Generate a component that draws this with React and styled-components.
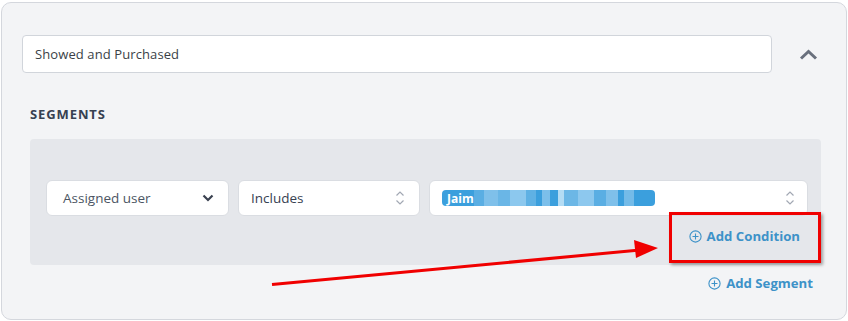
import React from 'react';
import styled, { createGlobalStyle } from 'styled-components';

const GlobalStyle = createGlobalStyle`
  body {
    margin: 0;
    background: #ffffff;
    font-family: "Open Sans", "Noto Sans", sans-serif;
  }
`;

const Page = styled.div`
  position: relative;
  width: 848px;
  height: 321px;
  overflow: hidden;
`;

const Panel = styled.div`
  box-sizing: border-box;
  margin: 2px 0 0 1px;
  width: 846px;
  height: 318px;
  background: #f3f4f6;
  border: 1px solid #d4d7dd;
  border-radius: 10px;
  padding: 32px 25px 0 20px;
`;

const Header = styled.div`
  display: flex;
  align-items: center;
`;

const NameInput = styled.div`
  box-sizing: border-box;
  flex: 1;
  height: 38px;
  background: #ffffff;
  border: 1px solid #d1d5db;
  border-radius: 4px;
  display: flex;
  align-items: center;
  padding-left: 12px;
  font-size: 13px;
  letter-spacing: 0.1px;
  color: #3a3f47;
`;

const Toggle = styled.div`
  width: 49px;
  display: flex;
  justify-content: flex-end;
  padding-right: 3px;
  box-sizing: border-box;
`;

const Section = styled.div`
  margin-left: 8px;
`;

const Label = styled.div`
  margin-top: 33px;
  height: 16px;
  line-height: 16px;
  font-size: 13px;
  font-weight: 700;
  color: #374151;
  letter-spacing: 0.9px;
`;

const SegmentBox = styled.div`
  margin-top: 17px;
  background: #e5e7eb;
  border-radius: 4px;
  padding: 41px 13px 19px 16px;
`;

const Row = styled.div`
  display: flex;
  gap: 9px;
`;

const Select = styled.div`
  box-sizing: border-box;
  width: ${(p) => p.$width || 'auto'};
  flex: ${(p) => (p.$grow ? 1 : 'none')};
  height: 36px;
  background: #ffffff;
  border: 1px solid #dadde2;
  border-radius: 6px;
  display: flex;
  align-items: center;
  justify-content: space-between;
  padding: 0 ${(p) => p.$pr || 14}px 0 ${(p) => p.$pl || 12}px;
  font-size: 13.5px;
  font-weight: ${(p) => (p.$bold ? 500 : 400)};
  color: ${(p) => (p.$bold ? '#4b5563' : '#374151')};
`;

const Chip = styled.div`
  display: flex;
  align-items: center;
  height: 16px;
  width: 213px;
  background: #3b9fdd;
  border-radius: 4px;
  overflow: hidden;
  font-size: 12px;
  font-weight: 700;
  color: #ffffff;
  padding-left: 5px;
  box-sizing: border-box;
`;

const Blur = styled.span`
  display: inline-block;
  height: 16px;
  width: ${(p) => p.$w}px;
  background: ${(p) => p.$c};
`;

const FooterRow = styled.div`
  display: flex;
  justify-content: flex-end;
  margin-top: ${(p) => p.$mt}px;
  padding-right: ${(p) => p.$pr}px;
`;

const LinkButton = styled.div`
  display: flex;
  align-items: center;
  gap: 5px;
  height: 20px;
  font-size: 13.2px;
  font-weight: 700;
  color: #3d92c8;
`;

const Overlay = styled.svg`
  position: absolute;
  left: 0;
  top: 0;
  pointer-events: none;
`;

const Highlight = styled.div`
  position: absolute;
  left: 669px;
  top: 212px;
  width: 152px;
  height: 51px;
  box-sizing: border-box;
  border: 3px solid #f00000;
  box-shadow: 2px 2px 3px rgba(0, 0, 0, 0.35);
`;

const ChevronUp = () => (
  <svg width="19" height="11" viewBox="0 0 19 11">
    <path d="M2 9.5 L9.5 2.5 L17 9.5" fill="none" stroke="#69707d" strokeWidth="3" />
  </svg>
);

const ChevronDown = () => (
  <svg width="12" height="8" viewBox="0 0 12 8">
    <path d="M1.5 1.5 L6 6 L10.5 1.5" fill="none" stroke="#3a4150" strokeWidth="2.2" />
  </svg>
);

const Selector = () => (
  <svg width="10" height="16" viewBox="0 0 10 16">
    <path d="M1.5 5.5 L5 2 L8.5 5.5 M1.5 10.5 L5 14 L8.5 10.5" fill="none" stroke="#a2a8b3" strokeWidth="1.2" />
  </svg>
);

const PlusCircle = () => (
  <svg width="13" height="13" viewBox="0 0 13 13">
    <circle cx="6.5" cy="6.5" r="5.6" fill="none" stroke="#3d92c8" strokeWidth="1.1" />
    <path d="M6.5 3.5 V9.5 M3.5 6.5 H9.5" stroke="#3d92c8" strokeWidth="1.1" />
  </svg>
);

const blurs = [
  ['#5aaee3', 10], ['#7fc0ea', 14], ['#6ab6e6', 12], ['#8cc8ee', 16], ['#5fb1e4', 10],
  ['#3b9fdd', 6], ['#7cbfea', 8], ['#3b9fdd', 8], ['#b4dcf4', 6], ['#6cb7e6', 14],
  ['#8dc8ee', 16], ['#5aaee3', 12], ['#7fc0ea', 12], ['#3b9fdd', 6], ['#74bbe8', 10],
  ['#3b9fdd', 6],
];

export default function App() {
  return (
    <Page>
      <GlobalStyle />
      <Panel>
        <Header>
          <NameInput>Showed and Purchased</NameInput>
          <Toggle>
            <ChevronUp />
          </Toggle>
        </Header>
        <Section>
          <Label>SEGMENTS</Label>
          <SegmentBox>
            <Row>
              <Select $width="183px" $bold $pl={16} $pr={14}>
                Assigned user
                <ChevronDown />
              </Select>
              <Select $width="182px">
                Includes
                <Selector />
              </Select>
              <Select $grow $pr={12}>
                <Chip>
                  Jaim
                  {blurs.map(([c, w], i) => (
                    <Blur key={i} $c={c} $w={w} />
                  ))}
                </Chip>
                <Selector />
              </Select>
            </Row>
            <FooterRow $mt={10} $pr={8}>
              <LinkButton>
                <PlusCircle />
                Add Condition
              </LinkButton>
            </FooterRow>
          </SegmentBox>
          <FooterRow $mt={8} $pr={8}>
            <LinkButton>
              <PlusCircle />
              Add Segment
            </LinkButton>
          </FooterRow>
        </Section>
      </Panel>
      <Highlight />
      <Overlay width="848" height="321" viewBox="0 0 848 321">
        <line x1="272" y1="284.5" x2="640" y2="250" stroke="#f00000" strokeWidth="3" />
        <polygon points="634,240 658,248 636,258" fill="#f00000" />
      </Overlay>
    </Page>
  );
}
